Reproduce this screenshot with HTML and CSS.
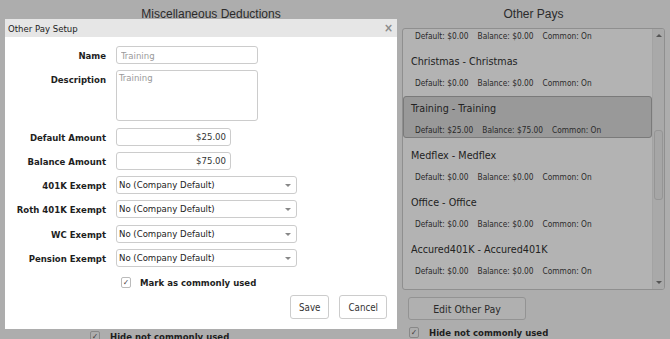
FILE: index.html
```html
<!DOCTYPE html>
<html lang="en">
  <head>
    <meta charset="UTF-8" />
    <title>Other Pay Setup</title>
    <link rel="stylesheet" href="styles.css">
  </head>
  <body>
    <div class="page">
      <section class="col col-left">
        <h2>Miscellaneous Deductions</h2>
        <div class="left-body"></div>
        <label class="check check-left"><span class="box">&#10003;</span>Hide not commonly used</label>
      </section>
      <section class="col col-right">
        <h2>Other Pays</h2>
        <div class="list">
          <div class="list-items">
            <div class="item">
              <div class="item-title">Bonus - Bonus</div>
              <div class="item-info"><span>Default: $0.00</span><span>Balance: $0.00</span><span>Common: On</span></div>
            </div>
            <div class="item">
              <div class="item-title">Christmas - Christmas</div>
              <div class="item-info"><span>Default: $0.00</span><span>Balance: $0.00</span><span>Common: On</span></div>
            </div>
            <div class="item selected">
              <div class="item-title">Training - Training</div>
              <div class="item-info"><span>Default: $25.00</span><span>Balance: $75.00</span><span>Common: On</span></div>
            </div>
            <div class="item">
              <div class="item-title">Medflex - Medflex</div>
              <div class="item-info"><span>Default: $0.00</span><span>Balance: $0.00</span><span>Common: On</span></div>
            </div>
            <div class="item">
              <div class="item-title">Office - Office</div>
              <div class="item-info"><span>Default: $0.00</span><span>Balance: $0.00</span><span>Common: On</span></div>
            </div>
            <div class="item">
              <div class="item-title">Accured401K - Accured401K</div>
              <div class="item-info"><span>Default: $0.00</span><span>Balance: $0.00</span><span>Common: On</span></div>
            </div>
          </div>
          <div class="scrollbar">
            <span class="arrow-up"></span>
            <div class="track"><div class="thumb"></div></div>
            <span class="arrow-down"></span>
          </div>
        </div>
        <button class="edit-btn">Edit Other Pay</button>
        <label class="check check-right"><span class="box">&#10003;</span>Hide not commonly used</label>
      </section>
    </div>

    <div class="modal">
      <div class="modal-title">
        <span>Other Pay Setup</span>
        <span class="close">&#215;</span>
      </div>
      <div class="modal-body">
        <div class="form">
          <label>Name</label>
          <input class="field field-name muted" type="text" value="Training">
          <label>Description</label>
          <textarea class="field field-desc muted">Training</textarea>
          <label>Default Amount</label>
          <input class="field field-amount" type="text" value="$25.00">
          <label>Balance Amount</label>
          <input class="field field-amount" type="text" value="$75.00">
          <label>401K Exempt</label>
          <div class="select">No (Company Default)</div>
          <label>Roth 401K Exempt</label>
          <div class="select">No (Company Default)</div>
          <label>WC Exempt</label>
          <div class="select">No (Company Default)</div>
          <label>Pension Exempt</label>
          <div class="select">No (Company Default)</div>
        </div>
        <label class="check check-modal"><span class="box">&#10003;</span>Mark as commonly used</label>
        <div class="actions">
          <button class="btn">Save</button>
          <button class="btn">Cancel</button>
        </div>
      </div>
    </div>
  </body>
</html>
```

FILE: styles.css
```css
* {
  box-sizing: border-box;
}
html,
body {
  margin: 0;
  padding: 0;
  height: 100%;
  overflow: hidden;
}
body {
  background: #adadad;
  color: #262626;
  font-family: "DejaVu Sans Condensed", "DejaVu Sans", sans-serif;
  font-stretch: condensed;
  font-size: 9.5px;
}
.page {
  display: grid;
  grid-template-columns: 378px 263px;
  column-gap: 2px;
  padding-left: 22px;
  height: 100%;
}
.col {
  display: flex;
  flex-direction: column;
}
h2 {
  margin: 0;
  padding-top: 7px;
  font-family: "Liberation Sans", Arial, sans-serif;
  font-size: 12px;
  font-weight: normal;
  line-height: 15px;
  text-align: center;
  color: #2b2b2b;
}
.left-body {
  height: 303px;
}

/* list of other pays */
.list {
  margin-top: 6px;
  height: 262px;
  border: 1px solid #8f8f8f;
  border-radius: 3px;
  background: #b3b3b3;
  display: flex;
  overflow: hidden;
}
.list-items {
  flex: 1;
  margin-top: -27px;
}
.item {
  height: 42px;
  margin-bottom: 5px;
  padding: 5px 0 0 7px;
  border: 1px solid transparent;
  border-radius: 3px;
}
.item.selected {
  background: #999999;
  border-color: #7a7a7a;
}
.item-title {
  font-size: 10.7px;
  line-height: 14px;
  color: #222;
}
.item-info {
  margin-top: 8px;
  padding-left: 4px;
  font-size: 8.3px;
  line-height: 12px;
  display: flex;
  gap: 9px;
  color: #2a2a2a;
}
.scrollbar {
  width: 12px;
  display: flex;
  flex-direction: column;
  align-items: center;
  background: #a9a9a9;
  border-left: 1px solid #a3a3a3;
}
.arrow-up,
.arrow-down {
  width: 0;
  height: 0;
  border-left: 3px solid transparent;
  border-right: 3px solid transparent;
  margin: 5px 0;
}
.arrow-up {
  border-bottom: 3px solid #555;
}
.arrow-down {
  border-top: 3px solid #555;
}
.track {
  flex: 1;
  width: 100%;
  padding-top: 88px;
  display: flex;
  justify-content: center;
}
.thumb {
  width: 9px;
  height: 70px;
  background: #a6a6a6;
  border: 1px solid #959595;
  border-radius: 3px;
}
.edit-btn {
  margin: 7px 0 0 6px;
  width: 118px;
  height: 23px;
  font: inherit;
  font-size: 10.5px;
  color: #2a2a2a;
  background: #b0b0b0;
  border: 1px solid #939393;
  border-radius: 3px;
}

/* checkboxes */
.check {
  display: flex;
  align-items: center;
  font-weight: bold;
  font-size: 9.5px;
  color: #1e1e1e;
}
.box {
  width: 10px;
  height: 11px;
  margin-right: 9px;
  border: 1px solid #999;
  border-radius: 2px;
  font-size: 8px;
  line-height: 9px;
  text-align: center;
  font-weight: normal;
  color: #333;
}
.check-left {
  padding-left: 68px;
  height: 12px;
  margin-top: 5px;
}
.check-right {
  padding-left: 7px;
  height: 12px;
  margin-top: 6px;
}
.check-left .box,
.check-right .box {
  border-color: #888;
  margin-right: 10px;
}

/* dialog */
.modal {
  position: absolute;
  left: 5px;
  top: 19px;
  width: 392px;
  height: 310px;
  background: #fff;
  display: flex;
  flex-direction: column;
}
.modal-title {
  height: 18px;
  padding: 0 4px 0 3px;
  background: #e6e6e6;
  display: flex;
  justify-content: space-between;
  align-items: center;
  color: #222;
  font-size: 9.5px;
}
.close {
  color: #8a8a8a;
  font-size: 12px;
  font-weight: bold;
}
.modal-body {
  padding: 9px 10px 10px 0;
  display: flex;
  flex-direction: column;
  flex: 1;
}
.form {
  display: grid;
  grid-template-columns: 101px auto;
  column-gap: 10px;
  row-gap: 6.3px;
  justify-items: start;
}
.form label {
  justify-self: end;
  font-weight: bold;
  padding-top: 2px;
  line-height: 16px;
  color: #1e1e1e;
}
.field {
  height: 18px;
  border: 1px solid #ccc;
  border-radius: 3px;
  padding: 0 4px;
  font: inherit;
  color: #333;
  background: #fff;
  outline: none;
}
.muted {
  color: #9a9a9a;
}
.field-name {
  width: 142px;
}
.field-desc {
  width: 142px;
  height: 51px;
  resize: none;
  padding: 1px 2px;
}
.field-amount {
  width: 115px;
  text-align: right;
  padding-right: 4px;
}
.select {
  position: relative;
  width: 181px;
  height: 18px;
  border: 1px solid #ccc;
  border-radius: 3px;
  padding-left: 2px;
  line-height: 16px;
  color: #222;
}
.select::after {
  content: "";
  position: absolute;
  right: 5px;
  top: 7px;
  border-left: 3px solid transparent;
  border-right: 3px solid transparent;
  border-top: 3px solid #888;
}
.check-modal {
  margin: 10px 0 0 116px;
  height: 11px;
}
.check-modal .box {
  border-color: #bbb;
}
.actions {
  margin-top: auto;
  display: flex;
  justify-content: flex-end;
  gap: 10px;
}
.btn {
  height: 24px;
  padding: 0 8px;
  font: inherit;
  font-size: 9.7px;
  color: #333;
  background: #fff;
  border: 1px solid #ccc;
  border-radius: 3px;
}
```
